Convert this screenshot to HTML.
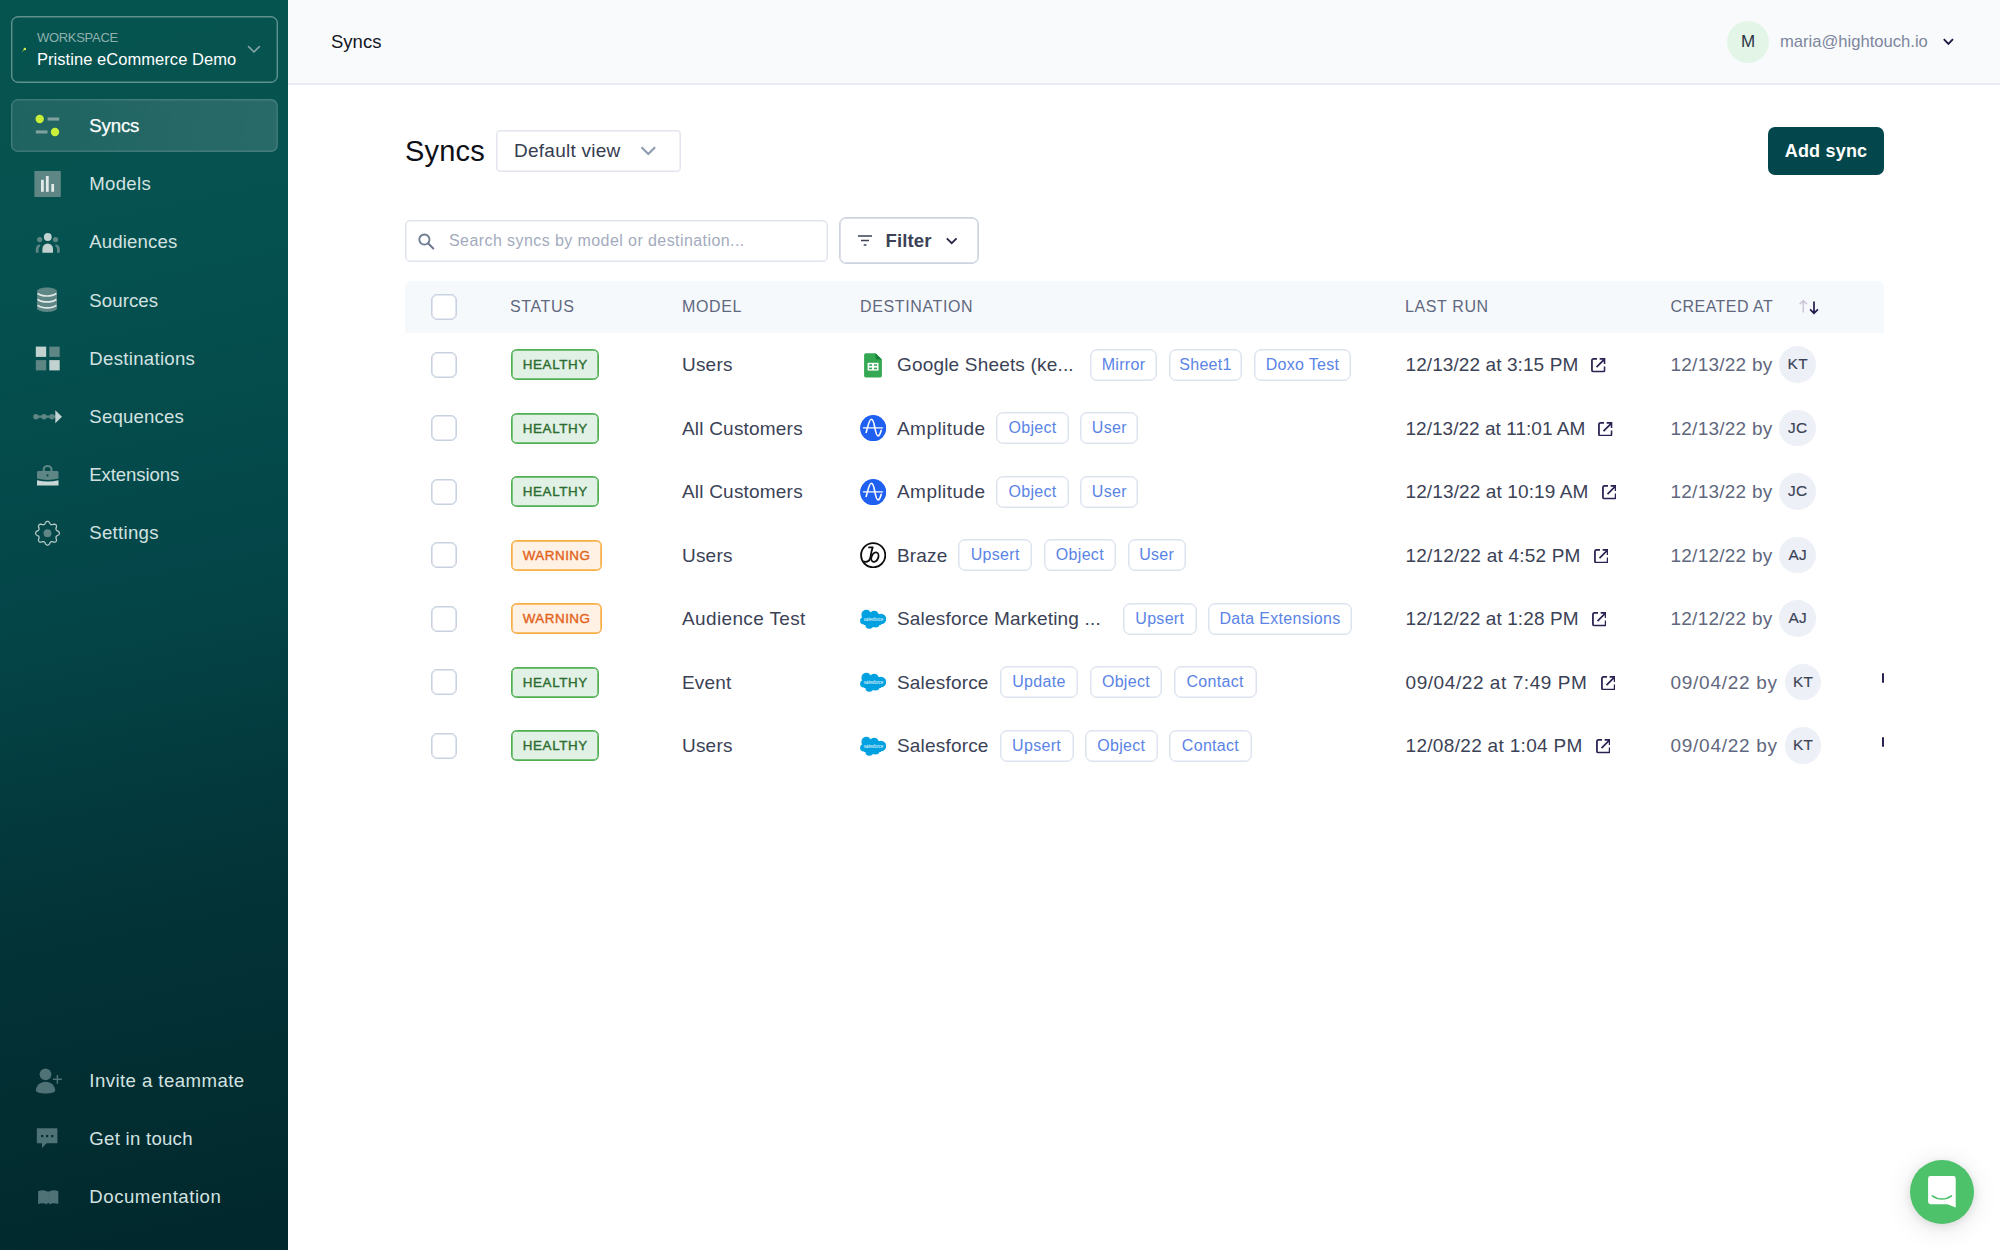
<!DOCTYPE html>
<html lang="en">
<head>
<meta charset="utf-8">
<title>Syncs</title>
<style>
*{box-sizing:border-box;margin:0;padding:0}
html,body{width:2000px;height:1250px;overflow:hidden;background:#fff}
body{font-family:"Liberation Sans",sans-serif;color:#3b4256;position:relative}
.abs{position:absolute}
/* ---------- sidebar ---------- */
#side{position:absolute;left:0;top:0;width:288px;height:1250px;background:linear-gradient(168deg,#06544f 0%,#055150 22%,#044548 48%,#033337 72%,#01282c 100%)}
#ws{position:absolute;left:11px;top:16px;width:267px;height:67px;border:1px solid rgba(255,255,255,.36);box-shadow:inset 0 0 0 .4px rgba(255,255,255,.36);border-radius:7px}
#ws .l1{position:absolute;left:25px;top:12.500px;font-size:13px;line-height:15px;color:#8eb1ae;letter-spacing:-.3px}
#ws .l2{position:absolute;left:25px;top:32px;font-size:16.5px;line-height:20px;color:#fff;letter-spacing:.05px;white-space:nowrap}
.nav{position:absolute;left:11px;width:267px;height:52px;border-radius:7px}
.nav.on{background:linear-gradient(100deg,rgba(255,255,255,.10),rgba(255,255,255,.145));border:1px solid rgba(255,255,255,.13);box-shadow:inset 0 0 0 .4px rgba(255,255,255,.13);height:52.500px;margin-top:-.7px}
.nav span{position:absolute;left:78.300px;top:0;height:52px;line-height:52px;font-size:18.6px;color:#d3e2e0;white-space:nowrap;letter-spacing:.1px}
.nav.on span{color:#fff;left:77.300px;top:-.8px;-webkit-text-stroke:.25px #fff}
.nav svg{position:absolute;overflow:visible}
/* ---------- header ---------- */
#top{position:absolute;left:288px;top:0;width:1712px;height:85px;background:#f9fafc;border-bottom:2px solid #e9ecf4}
#top .crumb{position:absolute;left:43px;top:30.3px;font-size:18.5px;line-height:24px;color:#14161f}
#av{position:absolute;left:1439px;top:20.700px;width:42px;height:42px;border-radius:50%;background:#e3f5e6;color:#2c3347;font-size:17px;line-height:42px;text-align:center}
#mail{position:absolute;left:1492px;top:30px;font-size:16.6px;line-height:24px;color:#7d869c;white-space:nowrap}
/* ---------- main ---------- */
h1{position:absolute;left:405px;top:133.300px;font-size:29px;line-height:36px;font-weight:400;color:#0e1017;letter-spacing:.2px}
#view{position:absolute;left:496px;top:130px;width:185px;height:41.500px;border:1px solid #e2e5ef;box-shadow:inset 0 0 0 .5px #e2e5ef;border-radius:4px;background:#fff}
#view span{position:absolute;left:17px;top:8px;font-size:19px;line-height:24px;color:#353c50;letter-spacing:.25px;white-space:nowrap}
#add{position:absolute;left:1768px;top:127px;width:116px;height:47.500px;border-radius:7px;background:#03474c;color:#fff;font-weight:700;font-size:18px;line-height:48px;text-align:center;letter-spacing:.2px}
#search{position:absolute;left:405px;top:220px;width:423px;height:41.500px;border:1px solid #dfe3ee;box-shadow:inset 0 0 0 .5px #dfe3ee;border-radius:5px;background:#fff}
#search span{position:absolute;left:43px;top:7.500px;font-size:16px;line-height:24px;color:#a3abbd;white-space:nowrap;letter-spacing:.42px}
#filter{position:absolute;left:839px;top:217.300px;width:140px;height:46.800px;border:1px solid #cdd4e0;box-shadow:inset 0 0 0 .7px #cdd4e0;border-radius:7px;background:#fff}
#filter span{position:absolute;left:45.500px;top:10.500px;font-size:18.600px;line-height:24px;color:#3b4256;font-weight:700;letter-spacing:.1px}
#thead{position:absolute;left:405px;top:281px;width:1479px;height:52px;background:#f6f9fc;border-radius:6px 6px 0 0}
.th{position:absolute;top:296px;font-size:16px;line-height:22px;color:#5f687e;letter-spacing:.62px;white-space:nowrap}
.cb{position:absolute;left:431px;width:26px;height:26px;border:1px solid #c9d2e1;box-shadow:inset 0 0 0 .6px #c9d2e1;border-radius:6px;background:#fff}
.row{position:absolute;left:405px;width:1479px;height:64px}
.row>*{position:absolute}
.badge{left:106px;top:16.500px;height:31.200px;width:88px;text-align:center;border-radius:5.500px;border:1px solid #4fb052;box-shadow:inset 0 0 0 .7px #4fb052;background:#e2f1e5;color:#2b6c2f;font-size:13.400px;line-height:29.600px;letter-spacing:.62px;padding-left:.6px;white-space:nowrap;-webkit-text-stroke:.38px #2b6c2f}
.badge.w{width:90.600px;border-color:#f6ae45;box-shadow:inset 0 0 0 .7px #f6ae45;background:#fff1e4;color:#e2631a;-webkit-text-stroke:.38px #e2631a;letter-spacing:.5px}
.model{left:277px;top:19.500px;font-size:19px;line-height:26px;color:#3b4256;white-space:nowrap;letter-spacing:.2px}
.dest{left:455px;top:15.200px;height:34px;display:flex;align-items:center;white-space:nowrap}
.dest svg{flex:none;width:26px;height:26px;margin-right:11px}
.dest .nm{display:inline-block;position:relative;top:.4px;font-size:19px;line-height:26px;color:#3b4256;letter-spacing:.18px;margin-right:11.400px}
.tag{display:inline-block;height:32px;border:1px solid #dce2ee;box-shadow:inset 0 0 0 .5px #dce2ee;border-radius:7px;text-align:center;font-size:16px;line-height:30.200px;color:#5a84e6;margin-right:11.400px;letter-spacing:.3px;background:#fff}
.run{left:1000.500px;top:16.900px;height:32px;display:flex;align-items:center;font-size:19px;color:#3b4256;white-space:nowrap;letter-spacing:.16px}
.run svg{margin-left:13.100px;flex:none}
.cr{left:1265.500px;top:14.700px;height:36px;display:flex;align-items:center;font-size:19px;color:#5f687e;white-space:nowrap;letter-spacing:.24px}
.cr i{font-style:normal;display:block;position:relative;top:-.5px;width:36.600px;height:36.600px;border-radius:50%;background:#edf0f6;color:#3b4256;font-size:15.400px;line-height:35.600px;text-align:center;margin-left:7px;letter-spacing:.3px;-webkit-text-stroke:.15px #3b4256}
.tick{position:absolute;left:1882px;width:2px;height:10px;background:#2b2350;border-radius:1px}
#chat{position:absolute;left:1910px;top:1160px;width:64px;height:64px;border-radius:50%;background:#4ec26b;box-shadow:0 2px 10px rgba(0,0,0,.10),0 4px 28px rgba(0,0,0,.10)}
</style>
</head>
<body>
<div id="side">
  <div id="ws"><div class="l1">WORKSPACE</div><div class="l2">Pristine eCommerce Demo</div></div>
  <div class="nav on" style="top:100.0px"><span style="letter-spacing:-0.15px">Syncs</span></div>
  <div class="nav" style="top:158.2px"><span style="letter-spacing:0.3px">Models</span></div>
  <div class="nav" style="top:216.4px"><span style="letter-spacing:0.15px">Audiences</span></div>
  <div class="nav" style="top:274.6px"><span style="letter-spacing:0.1px">Sources</span></div>
  <div class="nav" style="top:332.8px"><span style="letter-spacing:0.3px">Destinations</span></div>
  <div class="nav" style="top:391.0px"><span style="letter-spacing:0.18px">Sequences</span></div>
  <div class="nav" style="top:449.2px"><span style="letter-spacing:-0.1px">Extensions</span></div>
  <div class="nav" style="top:507.4px"><span style="letter-spacing:0.28px">Settings</span></div>
  <div class="nav bt" style="top:1055.0px"><span style="letter-spacing:0.44px">Invite a teammate</span></div>
  <div class="nav bt" style="top:1113.0px"><span style="letter-spacing:0.27px">Get in touch</span></div>
  <div class="nav bt" style="top:1171.0px"><span style="letter-spacing:0.54px">Documentation</span></div>
  <svg id="icons" class="abs" style="left:0;top:0" width="288" height="1250" viewBox="0 0 288 1250">
    <!-- workspace -->
    <path d="M22.700 51.200l2-2" stroke="#8fc43a" stroke-width="1" stroke-linecap="round"/><circle cx="24.800" cy="49" r="1.250" fill="#d2f24a"/>
    <path d="M248.6 46.6l5.4 5.4 5.4-5.4" fill="none" stroke="#7fa5a2" stroke-width="1.7" stroke-linecap="round" stroke-linejoin="round"/>
    <!-- syncs -->
    <circle cx="39.7" cy="119" r="4.2" fill="#c9f038"/><rect x="47.6" y="117.5" width="11.6" height="3.1" fill="#7fa09f"/>
    <rect x="35.8" y="130.4" width="11.7" height="3.1" fill="#7fa09f"/><circle cx="55" cy="132" r="4.2" fill="#c9f038"/>
    <!-- models -->
    <rect x="34.4" y="171" width="26.4" height="26" fill="#5d8684"/>
    <rect x="41" y="179.8" width="2.8" height="12" fill="#e2eae9"/><rect x="45.9" y="176" width="2.8" height="15.8" fill="#e2eae9"/><rect x="51.3" y="184" width="2.8" height="7.8" fill="#e2eae9"/>
    <!-- audiences -->
    <circle cx="39.7" cy="239.6" r="2.6" fill="#5d8684"/><circle cx="55.5" cy="239.6" r="2.6" fill="#5d8684"/>
    <path d="M35.8 252.8v-3.6a4.6 4.6 0 0 1 4.4-4.6v1.9a2.9 2.9 0 0 0-1.6 2.7v3.6z" fill="#5d8684"/>
    <path d="M59.8 252.8v-3.6a4.6 4.6 0 0 0-4.4-4.6v1.9a2.9 2.9 0 0 1 1.6 2.7v3.6z" fill="#5d8684"/>
    <circle cx="47.8" cy="237" r="3.9" fill="#c2d2d0"/>
    <path d="M42.4 252.8v-4a5.3 5.3 0 0 1 10.6 0v4z" fill="#c2d2d0"/>
    <!-- sources -->
    <path d="M37 291.2c0-2 4.5-3.7 10-3.7s10 1.700 10 3.700v17c0 2-4.500 3.700-10 3.700s-10-1.700-10-3.700z" fill="#5d8684"/>
    <path d="M38.200 293.800c2 1.500 5.500 2.200 8.800 2.200s6.800-.7 8.800-2.200M38.200 299.700c2 1.500 5.500 2.200 8.800 2.200s6.800-.7 8.800-2.200M38.200 305.600c2 1.500 5.500 2.200 8.800 2.200s6.800-.7 8.800-2.200" fill="none" stroke="#e2eae9" stroke-width="1.700" stroke-linecap="round"/>
    <!-- destinations -->
    <rect x="35.800" y="346.600" width="10.400" height="10.300" fill="#c2d2d0"/><rect x="49.300" y="346.600" width="10.400" height="10.300" fill="#5d8684"/>
    <rect x="35.800" y="360.100" width="10.400" height="10.300" fill="#5d8684"/><rect x="49.300" y="360.100" width="10.400" height="10.300" fill="#c2d2d0"/>
    <!-- sequences -->
    <path d="M35 416.700h20" stroke="#5d8684" stroke-width="2.200" stroke-linecap="round"/>
    <circle cx="35.900" cy="416.700" r="2.700" fill="#5d8684"/><circle cx="44.100" cy="416.700" r="2.700" fill="#5d8684"/><circle cx="52" cy="416.700" r="2.700" fill="#5d8684"/>
    <path d="M55.300 410.200l6.700 6.500-6.700 6.500z" fill="#c2d2d0"/>
    <!-- extensions -->
    <path d="M43.700 471.200v-1.500a3.900 3.700 0 0 1 7.800 0v1.500" fill="none" stroke="#5d8684" stroke-width="2.200"/>
    <path d="M37 472.200q0-1.200 1.200-1.200h19.100q1.200 0 1.200 1.200v6.400q-10.750 2.600-21.500 0z" fill="#5d8684"/>
    <circle cx="47.500" cy="475.400" r="1.100" fill="#0a4a4c"/>
    <path d="M37 480.200q10.750 2.600 21.500 0v5.200H37z" fill="#c9d7d6"/>
    <!-- settings -->
    <g transform="translate(47.500 533.200)">
      <path fill="none" stroke="#b4c8c6" stroke-width="1.3" stroke-linejoin="round" d="M11.90 0.00L11.86 0.39L11.73 0.77L11.53 1.14L11.25 1.48L10.89 1.80L10.40 2.07L9.89 2.31L9.52 2.55L9.20 2.79L8.94 3.03L8.74 3.29L8.59 3.56L8.50 3.85L8.47 4.18L8.48 4.53L8.53 4.93L8.63 5.36L8.81 5.89L8.97 6.43L9.00 6.91L8.96 7.35L8.84 7.75L8.66 8.11L8.41 8.41L8.11 8.66L7.75 8.84L7.35 8.96L6.91 9.00L6.43 8.97L5.89 8.81L5.36 8.63L4.93 8.53L4.53 8.48L4.18 8.47L3.85 8.50L3.56 8.59L3.29 8.74L3.03 8.94L2.79 9.20L2.55 9.52L2.31 9.89L2.07 10.40L1.80 10.89L1.48 11.25L1.14 11.53L0.77 11.73L0.39 11.86L0.00 11.90L-0.39 11.86L-0.77 11.73L-1.14 11.53L-1.48 11.25L-1.80 10.89L-2.07 10.40L-2.31 9.89L-2.55 9.52L-2.79 9.20L-3.03 8.94L-3.29 8.74L-3.56 8.59L-3.85 8.50L-4.18 8.47L-4.53 8.48L-4.93 8.53L-5.36 8.63L-5.89 8.81L-6.43 8.97L-6.91 9.00L-7.35 8.96L-7.75 8.84L-8.11 8.66L-8.41 8.41L-8.66 8.11L-8.84 7.75L-8.96 7.35L-9.00 6.91L-8.97 6.43L-8.81 5.89L-8.63 5.36L-8.53 4.93L-8.48 4.53L-8.47 4.18L-8.50 3.85L-8.59 3.56L-8.74 3.29L-8.94 3.03L-9.20 2.79L-9.52 2.55L-9.89 2.31L-10.40 2.07L-10.89 1.80L-11.25 1.48L-11.53 1.14L-11.73 0.77L-11.86 0.39L-11.90 0.00L-11.86 -0.39L-11.73 -0.77L-11.53 -1.14L-11.25 -1.48L-10.89 -1.80L-10.40 -2.07L-9.89 -2.31L-9.52 -2.55L-9.20 -2.79L-8.94 -3.03L-8.74 -3.29L-8.59 -3.56L-8.50 -3.85L-8.47 -4.18L-8.48 -4.53L-8.53 -4.93L-8.63 -5.36L-8.81 -5.89L-8.97 -6.43L-9.00 -6.91L-8.96 -7.35L-8.84 -7.75L-8.66 -8.11L-8.41 -8.41L-8.11 -8.66L-7.75 -8.84L-7.35 -8.96L-6.91 -9.00L-6.43 -8.97L-5.89 -8.81L-5.36 -8.63L-4.93 -8.53L-4.53 -8.48L-4.18 -8.47L-3.85 -8.50L-3.56 -8.59L-3.29 -8.74L-3.03 -8.94L-2.79 -9.20L-2.55 -9.52L-2.31 -9.89L-2.07 -10.40L-1.80 -10.89L-1.48 -11.25L-1.14 -11.53L-0.77 -11.73L-0.39 -11.86L-0.00 -11.90L0.39 -11.86L0.77 -11.73L1.14 -11.53L1.48 -11.25L1.80 -10.89L2.07 -10.40L2.31 -9.89L2.55 -9.52L2.79 -9.20L3.03 -8.94L3.29 -8.74L3.56 -8.59L3.85 -8.50L4.18 -8.47L4.53 -8.48L4.93 -8.53L5.36 -8.63L5.89 -8.81L6.43 -8.97L6.91 -9.00L7.35 -8.96L7.75 -8.84L8.11 -8.66L8.41 -8.41L8.66 -8.11L8.84 -7.75L8.96 -7.35L9.00 -6.91L8.97 -6.43L8.81 -5.89L8.63 -5.36L8.53 -4.93L8.48 -4.53L8.47 -4.18L8.50 -3.85L8.59 -3.56L8.74 -3.29L8.94 -3.03L9.20 -2.79L9.52 -2.55L9.89 -2.31L10.40 -2.07L10.89 -1.80L11.25 -1.48L11.53 -1.14L11.73 -0.77L11.86 -0.39Z"/>
      <circle r="3.900" fill="#5d8684"/>
    </g>
    <!-- invite -->
    <circle cx="45.500" cy="1074.300" r="5.900" fill="#4e7276"/>
    <path d="M35.900 1090.600c0-5 4.300-8.900 9.650-8.900s9.650 3.900 9.650 8.900c0 1.700-4.300 3-9.650 3s-9.650-1.300-9.650-3z" fill="#4e7276"/>
    <path d="M57.400 1074.900v8.800M53 1079.300h8.800" stroke="#4e7276" stroke-width="1.500"/>
    <!-- get in touch -->
    <path d="M36.800 1128.200h20.600v15.100H46.600l-4.600 4.700v-4.700h-5.200z" fill="#4e7276"/>
    <rect x="41" y="1135" width="2.200" height="2.200" fill="#022d32"/><rect x="46" y="1135" width="2.200" height="2.200" fill="#022d32"/><rect x="51.100" y="1135" width="2.200" height="2.200" fill="#022d32"/>
    <!-- documentation -->
    <path d="M38.100 1191.200c3-1.200 6-1.200 9 .3v12.900c-3-1.500-6-1.500-9-.3zM58.300 1191.200c-3-1.200-6-1.200-9 .3v12.900c3-1.500 6-1.500 9-.3z" fill="#4e7276"/>
    <path d="M46.600 1191.500h3.200v12.400l-1.600-1.200-1.600 1.200z" fill="#4e7276"/>
  </svg>
</div>
<div id="top">
  <div class="crumb">Syncs</div>
  <div id="av">M</div>
  <div id="mail">maria@hightouch.io</div>
</div>
<h1>Syncs</h1>
<div id="view"><span>Default view</span></div>
<div id="add">Add sync</div>
<div id="search"><span>Search syncs by model or destination...</span></div>
<div id="filter"><span>Filter</span></div>
<svg width="0" height="0" style="position:absolute">
  <defs>
    <symbol id="i-sheets" viewBox="0 0 26 26">
      <path d="M5.900 1.300h9.600l6.400 6.300v16.100a1.800 1.800 0 0 1-1.800 1.800H5.900a1.800 1.800 0 0 1-1.800-1.800V3.100a1.800 1.800 0 0 1 1.800-1.800z" fill="#34a853"/>
      <path d="M15.500 1.300l6.400 6.300h-4.600a1.800 1.800 0 0 1-1.800-1.800z" fill="#188038"/>
      <rect x="7.600" y="10.800" width="10.900" height="7.800" fill="#fff"/>
      <rect x="9.100" y="12.300" width="3" height="1.500" fill="#2ea44f"/><rect x="14" y="12.300" width="3" height="1.500" fill="#2ea44f"/>
      <rect x="9.100" y="15.600" width="3" height="1.600" fill="#2ea44f"/><rect x="14" y="15.600" width="3" height="1.600" fill="#2ea44f"/>
    </symbol>
    <symbol id="i-amp" viewBox="0 0 26 26">
      <circle cx="13.200" cy="13.200" r="13.100" fill="#2060f0"/>
      <path d="M3.300 12.800h19.200" stroke="#fff" stroke-width="1.350" stroke-linecap="round"/>
      <path d="M6.200 17.400C7.600 12.500 9.200 4.300 11.300 4.300c2.300 0 2.900 5.700 3.500 8.500.8 3.700 1.600 8.100 3.200 8.100s2.600-3.400 3.200-5.700" fill="none" stroke="#fff" stroke-width="1.600" stroke-linecap="round"/>
    </symbol>
    <symbol id="i-braze" viewBox="0 0 26 26">
      <circle cx="13.200" cy="13.200" r="12.100" fill="#fff" stroke="#0d0d0d" stroke-width="1.850"/>
      <path d="M2.900 19.400c3.300 1 6.900.2 7.500-3.900.6-4 1.300-7.500 2.300-10.100H9" fill="none" stroke="#0d0d0d" stroke-width="1.800" stroke-linecap="round" stroke-linejoin="round"/>
      <ellipse cx="14.900" cy="15.100" rx="3.300" ry="5" transform="rotate(22 14.900 15.100)" fill="none" stroke="#0d0d0d" stroke-width="1.800"/>
    </symbol>
    <symbol id="i-sf" viewBox="0 0 26 26">
      <g fill="#00a1e0">
        <circle cx="6.300" cy="8.700" r="4.900"/><circle cx="14.200" cy="9.300" r="4.500"/><circle cx="20.900" cy="13" r="5.300"/>
        <circle cx="3.900" cy="14.700" r="3.800"/><circle cx="9.400" cy="18.700" r="4"/><circle cx="15.600" cy="17" r="4.500"/>
        <rect x="4" y="8" width="17" height="11"/>
      </g>
      <text x="3.700" y="15.100" font-family="Liberation Sans" font-style="italic" font-size="4.600" fill="#fff" textLength="19.400" lengthAdjust="spacingAndGlyphs">salesforce</text>
    </symbol>
    <symbol id="i-ext" viewBox="0 0 14 14">
      <path d="M5.800.900H2.300A1.400 1.400 0 0 0 .900 2.300v9.400a1.400 1.400 0 0 0 1.400 1.400h9.400a1.400 1.400 0 0 0 1.400-1.400V8.200" fill="none" stroke="#2b2152" stroke-width="1.700"/>
      <path d="M8.300.900h4.800v4.800M13 1L5.300 8.700" fill="none" stroke="#2b2152" stroke-width="1.700"/>
    </symbol>
  </defs>
</svg>
<div id="thead"></div>
<div class="cb" style="top:293.5px"></div>
<div class="th" style="left:510px">STATUS</div>
<div class="th" style="left:682px">MODEL</div>
<div class="th" style="left:860px">DESTINATION</div>
<div class="th" style="left:1405px">LAST RUN</div>
<div class="th" style="left:1670.500px;letter-spacing:.46px">CREATED AT</div>
<svg class="abs" style="left:1796px;top:298px" width="26" height="18" viewBox="0 0 26 18"><path d="M7.300 14.400V2.800M3.600 6.300l3.700-3.700 3.700 3.700" fill="none" stroke="#cac6d8" stroke-width="1.500"/><path d="M18 3.400v11.700M14.100 11.400l3.900 3.900 3.900-3.900" fill="none" stroke="#241a4d" stroke-width="1.700"/></svg>
<div class="cb" style="top:351.5px"></div>
<div class="row" style="top:332.5px"><div class="badge">HEALTHY</div><div class="model">Users</div><div class="dest"><svg><use href="#i-sheets"/></svg><span class="nm" style="width:181.4px">Google Sheets (ke...</span><span class="tag" style="width:67.5px">Mirror</span><span class="tag" style="width:73.7px">Sheet1</span><span class="tag" style="width:97.5px">Doxo Test</span></div><div class="run" style="letter-spacing:0.09px">12/13/22 at 3:15 PM<svg width="14.600" height="14.600"><use href="#i-ext"/></svg></div><div class="cr">12/13/22 by<i>KT</i></div></div>
<div class="cb" style="top:415.0px"></div>
<div class="row" style="top:396.0px"><div class="badge">HEALTHY</div><div class="model">All Customers</div><div class="dest"><svg><use href="#i-amp"/></svg><span class="nm" style="width:87.9px;letter-spacing:.45px">Amplitude</span><span class="tag" style="width:72.6px">Object</span><span class="tag" style="width:58.2px">User</span></div><div class="run" style="letter-spacing:0.03px">12/13/22 at 11:01 AM<svg width="14.600" height="14.600"><use href="#i-ext"/></svg></div><div class="cr">12/13/22 by<i>JC</i></div></div>
<div class="cb" style="top:478.5px"></div>
<div class="row" style="top:459.5px"><div class="badge">HEALTHY</div><div class="model">All Customers</div><div class="dest"><svg><use href="#i-amp"/></svg><span class="nm" style="width:87.9px;letter-spacing:.45px">Amplitude</span><span class="tag" style="width:72.6px">Object</span><span class="tag" style="width:58.2px">User</span></div><div class="run" style="letter-spacing:0.12px">12/13/22 at 10:19 AM<svg width="14.600" height="14.600"><use href="#i-ext"/></svg></div><div class="cr">12/13/22 by<i>JC</i></div></div>
<div class="cb" style="top:542.0px"></div>
<div class="row" style="top:523.0px"><div class="badge w">WARNING</div><div class="model">Users</div><div class="dest"><svg><use href="#i-braze"/></svg><span class="nm" style="width:49.8px">Braze</span><span class="tag" style="width:74px">Upsert</span><span class="tag" style="width:72.6px">Object</span><span class="tag" style="width:58.2px">User</span></div><div class="run" style="letter-spacing:0.21px">12/12/22 at 4:52 PM<svg width="14.600" height="14.600"><use href="#i-ext"/></svg></div><div class="cr">12/12/22 by<i>AJ</i></div></div>
<div class="cb" style="top:605.5px"></div>
<div class="row" style="top:586.5px"><div class="badge w">WARNING</div><div class="model" style="letter-spacing:.36px">Audience Test</div><div class="dest"><svg><use href="#i-sf"/></svg><span class="nm" style="width:214.4px">Salesforce Marketing ...</span><span class="tag" style="width:74px">Upsert</span><span class="tag" style="width:143.7px">Data Extensions</span></div><div class="run" style="letter-spacing:0.11px">12/12/22 at 1:28 PM<svg width="14.600" height="14.600"><use href="#i-ext"/></svg></div><div class="cr">12/12/22 by<i>AJ</i></div></div>
<div class="cb" style="top:669.0px"></div>
<div class="row" style="top:650.0px"><div class="badge">HEALTHY</div><div class="model">Event</div><div class="dest"><svg><use href="#i-sf"/></svg><span class="nm" style="width:91.2px">Salesforce</span><span class="tag" style="width:78.7px">Update</span><span class="tag" style="width:72.6px">Object</span><span class="tag" style="width:83px">Contact</span></div><div class="run" style="letter-spacing:0.57px">09/04/22 at 7:49 PM<svg width="14.600" height="14.600"><use href="#i-ext"/></svg></div><div class="cr" style="letter-spacing:.73px">09/04/22 by<i>KT</i></div></div>
<div class="tick" style="top:673.0px"></div>
<div class="cb" style="top:732.5px"></div>
<div class="row" style="top:713.5px"><div class="badge">HEALTHY</div><div class="model">Users</div><div class="dest"><svg><use href="#i-sf"/></svg><span class="nm" style="width:91.2px">Salesforce</span><span class="tag" style="width:74px">Upsert</span><span class="tag" style="width:72.6px">Object</span><span class="tag" style="width:83px">Contact</span></div><div class="run" style="letter-spacing:0.32px">12/08/22 at 1:04 PM<svg width="14.600" height="14.600"><use href="#i-ext"/></svg></div><div class="cr" style="letter-spacing:.73px">09/04/22 by<i>KT</i></div></div>
<div class="tick" style="top:736.5px"></div>
<div id="chat"></div>
<svg id="ov" class="abs" style="left:0;top:0;pointer-events:none" width="2000" height="1250" viewBox="0 0 2000 1250">
  <!-- header chevron -->
  <path d="M1943.800 39.200l4.600 4.600 4.600-4.600" fill="none" stroke="#1f1a45" stroke-width="1.900"/>
  <!-- default view chevron -->
  <path d="M641.500 147.300l6.800 6.800 6.800-6.800" fill="none" stroke="#8f9bb0" stroke-width="2.100"/>
  <!-- search icon -->
  <circle cx="424.400" cy="239.600" r="5.100" fill="none" stroke="#6d7a90" stroke-width="1.800"/>
  <path d="M428.300 243.500l5 5" stroke="#6d7a90" stroke-width="2" stroke-linecap="round"/>
  <!-- filter icon -->
  <path d="M858 236h14M861 240.500h8M863.700 245h2.700" stroke="#3b4256" stroke-width="1.600"/>
  <path d="M946.800 238.300l4.900 4.900 4.900-4.900" fill="none" stroke="#2b2447" stroke-width="1.800"/>
  <!-- chat icon -->
  <path d="M1930.500 1176h22.800a2.400 2.400 0 0 1 2.400 2.400v29.200l-8.300-3.400h-16.900a2.400 2.400 0 0 1-2.400-2.400v-23.400a2.400 2.400 0 0 1 2.400-2.400z" fill="#fff"/>
  <path d="M1932.300 1195.800c5.800 4.200 13.400 4.200 19.200 0" fill="none" stroke="#4ec26b" stroke-width="1.600" stroke-linecap="round"/>
</svg>
</body>
</html>
